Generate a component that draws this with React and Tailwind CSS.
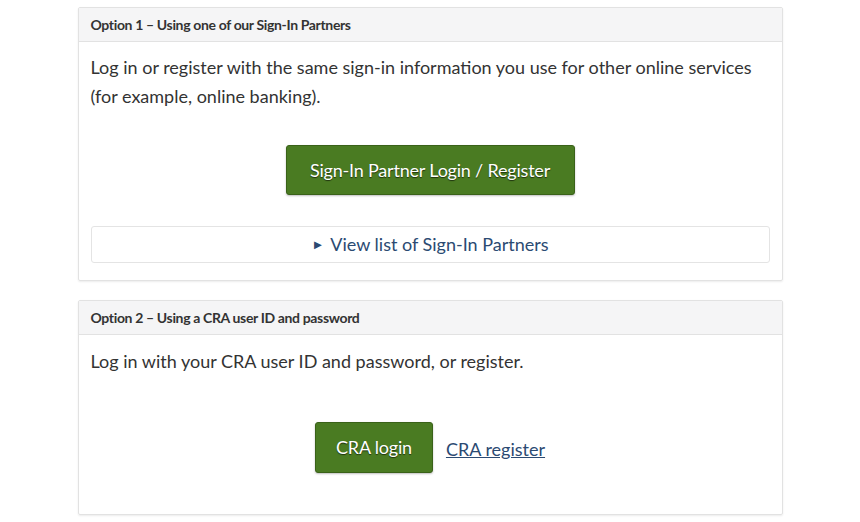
export default function App() {
  return (
    <div className="w-[860px] h-[522px] bg-white pt-[7px]" style={{ fontFamily: "Lato, 'Noto Sans', sans-serif" }}>
      <div className="w-[705px] mx-auto flex flex-col gap-[19px]">
        <section className="border border-[#e2e2e2] rounded-[2px] shadow-[0_1px_2px_rgba(0,0,0,0.08)]">
          <div className="h-[34px] bg-[#f5f5f6] border-b border-[#e2e2e2] px-[12px] flex items-center text-[14px] font-bold text-[#333] tracking-[-0.35px]">
            Option 1 – Using one of our Sign-In Partners
          </div>
          <div className="px-[12px] pt-[11px] pb-[17px]">
            <p className="text-[18px] leading-[29px] text-[#333]">
              Log in or register with the same sign-in information you use for other online services (for example, online banking).
            </p>
            <div className="flex justify-center mt-[34px]">
              <button className="w-[289px] h-[50px] bg-[#4a7b22] border border-[#3a6219] rounded-[3px] text-white text-[18px] tracking-[-0.2px] [text-shadow:0_1px_1px_rgba(0,0,0,0.6)] shadow-[0_1px_2px_rgba(0,0,0,0.25)]">
                Sign-In Partner Login / Register
              </button>
            </div>
            <div className="mt-[31px] h-[37px] border border-[#e4e4e4] rounded-[3px] flex items-center justify-center text-[18px] text-[#2b4a72]">
              <span className="text-[13px] mr-[6px]">►</span>View list of Sign-In Partners
            </div>
          </div>
        </section>
        <section className="border border-[#e2e2e2] rounded-[2px] shadow-[0_1px_2px_rgba(0,0,0,0.08)]">
          <div className="h-[34px] bg-[#f5f5f6] border-b border-[#e2e2e2] px-[12px] flex items-center text-[14px] font-bold text-[#333] tracking-[-0.35px]">
            Option 2 – Using a CRA user ID and password
          </div>
          <div className="px-[12px] pt-[12px] pb-[41px]">
            <p className="text-[18px] leading-[29px] text-[#333]">
              Log in with your CRA user ID and password, or register.
            </p>
            <div className="flex justify-center items-center mt-[46px] gap-[13px]">
              <button className="w-[118px] h-[51px] bg-[#4a7b22] border border-[#3a6219] rounded-[3px] text-white text-[18px] tracking-[-0.2px] [text-shadow:0_1px_1px_rgba(0,0,0,0.6)] shadow-[0_1px_2px_rgba(0,0,0,0.25)]">
                CRA login
              </button>
              <a className="text-[18px] text-[#2b4a72] underline mt-[4px]">CRA register</a>
            </div>
          </div>
        </section>
      </div>
    </div>
  );
}
